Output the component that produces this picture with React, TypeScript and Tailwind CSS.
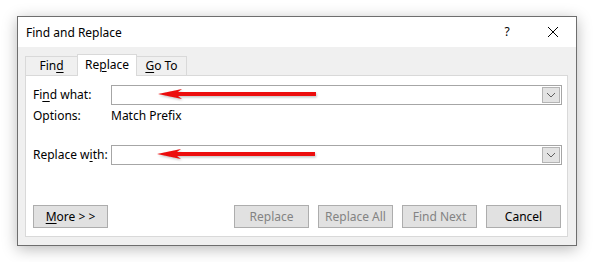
import React from "react";

const font = { fontFamily: '"Segoe UI", "Noto Sans", "Open Sans", sans-serif' };

function U({ children }: { children: React.ReactNode }) {
  return <span className="underline underline-offset-[2px] decoration-[1px]">{children}</span>;
}

function Chevron() {
  return (
    <svg width="10" height="6" viewBox="0 0 10 6">
      <path d="M1 1 L5 5 L9 1" fill="none" stroke="#606060" strokeWidth="1" />
    </svg>
  );
}

function Combo() {
  return (
    <div className="flex-1 h-[20px] border border-[#a6a6a6] bg-white flex justify-end items-stretch p-px">
      <div className="w-[18px] bg-[#e3e3e3] border border-[#b4b4b4] flex items-center justify-center">
        <Chevron />
      </div>
    </div>
  );
}

function Btn({ children, disabled }: { children: React.ReactNode; disabled?: boolean }) {
  return (
    <div
      className={
        "w-[75px] h-[23px] border border-[#adadad] bg-[#e1e1e1] flex items-center justify-center text-[12px] " +
        (disabled ? "text-[#838383]" : "text-[#000]")
      }
    >
      {children}
    </div>
  );
}

function Arrow({ top, left, id }: { top: number; left: number; id: string }) {
  return (
    <svg
      className="absolute"
      style={{ top, left }}
      width="164"
      height="16"
      viewBox="0 0 164 16"
    >
      <defs>
        <filter id={id + "b"} x="-10%" y="-50%" width="120%" height="200%">
          <feGaussianBlur stdDeviation="1.2" />
        </filter>
        <filter id={id + "s"} x="-10%" y="-50%" width="120%" height="200%">
          <feGaussianBlur stdDeviation="0.5" />
        </filter>
      </defs>
      <path
        d="M1 8.5 L25 3.5 L21 6.5 L159 6.5 L159 10.5 L21 10.5 L25 13.5 Z"
        fill="#000"
        opacity="0.22"
        filter={"url(#" + id + "b)"}
      />
      <path
        d="M0 7 L24 2 L20 5 L158 5 L158 9 L20 9 L24 12 Z"
        fill="#ec0b0b"
        filter={"url(#" + id + "s)"}
      />
    </svg>
  );
}

export default function App() {
  return (
    <div className="relative w-[594px] h-[262px] bg-white pl-[17px] pt-[16px]" style={font}>
      <div className="w-[560px] h-[230px] border border-[#6e6e6e] bg-[#f0f0f0] flex flex-col shadow-[0_3px_14px_rgba(0,0,0,0.28)]">
        {/* Title bar */}
        <div className="h-[30px] bg-white flex items-center pl-[8px] text-[12px] text-black">
          <span className="flex-1 pt-px">Find and Replace</span>
          <span className="w-[12px] text-center text-[12px] mr-[34px]">?</span>
          <svg width="12" height="12" viewBox="0 0 12 12" className="mr-[17px]">
            <path d="M1 1 L11 11 M11 1 L1 11" stroke="#000" strokeWidth="1" />
          </svg>
        </div>
        {/* Body */}
        <div className="flex-1 flex flex-col pl-[7px] pr-[8px] pb-[8px] pt-[7px]">
          {/* Tabs */}
          <div className="flex items-end h-[21px] text-[12px] text-black relative z-10">
            <div className="w-[52px] h-[19px] border border-b-0 border-r-0 border-[#d9d9d9] flex items-center justify-center">
              Fin<U>d</U>
            </div>
            <div className="w-[60px] h-[22px] -mb-px bg-white border border-b-0 border-[#d9d9d9] flex items-center justify-center pb-[2px]">
              Re<U>p</U>lace
            </div>
            <div className="w-[50px] h-[19px] border border-b-0 border-l-0 border-[#d9d9d9] flex items-center justify-center">
              <U>G</U>o To
            </div>
          </div>
          {/* Panel */}
          <div className="flex-1 bg-white border border-[#d9d9d9] flex flex-col pl-[7px] pr-[5px] pt-[9px] text-[12px] text-black">
            <div className="flex items-center">
              <span className="w-[78px]">Fi<U>n</U>d what:</span>
              <Combo />
            </div>
            <div className="flex items-center h-[22px]">
              <span className="w-[78px]">Options:</span>
              <span>Match Prefix</span>
            </div>
            <div className="flex items-center mt-[18px]">
              <span className="w-[78px]">Replace w<U>i</U>th:</span>
              <Combo />
            </div>
            <div className="flex items-center mt-[40px]">
              <Btn>
                <span>
                  <U>M</U>ore &gt; &gt;
                </span>
              </Btn>
              <div className="flex-1" />
              <div className="flex gap-[9px] mr-px">
                <Btn disabled>Replace</Btn>
                <Btn disabled>Replace All</Btn>
                <Btn disabled>Find Next</Btn>
                <Btn>Cancel</Btn>
              </div>
            </div>
          </div>
        </div>
      </div>
      <Arrow top={87} left={158} id="a1" />
      <Arrow top={147} left={157} id="a2" />
    </div>
  );
}
